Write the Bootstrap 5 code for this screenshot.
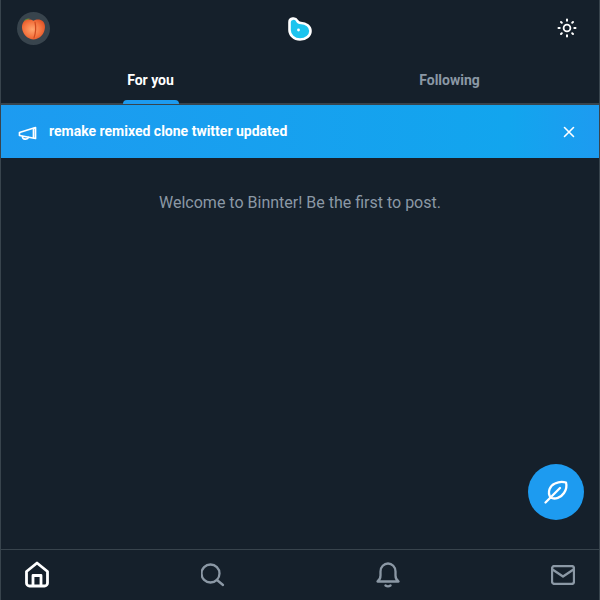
<!DOCTYPE html>
<html lang="en">
<head>
<meta charset="utf-8">
<title>Binnter</title>
<link href="https://cdn.jsdelivr.net/npm/bootstrap@5.3.0/dist/css/bootstrap.min.css" rel="stylesheet">
<style>
html,body{height:100%;}
body{background:#15202b;font-family:Roboto,"Liberation Sans",sans-serif;color:#fff;}
.shell{height:600px;border-left:1px solid #38444d;border-right:1px solid #38444d;background:#15202b;position:relative;}
.topbar{height:56px;padding:0 22px 0 16px;}
.topside{flex:1 1 0;}
.peach{width:33px;height:33px;border-radius:50%;background:#38444d;}
.logomark{margin:2px 0 0 6px;}
.tabs{height:49px;border-bottom:2px solid #38444d;}
.tabbtn{font-size:14px;font-weight:700;color:#8b98a5;height:100%;position:relative;padding-top:2px;}
.tabbtn.on{color:#fff;}
.tabbtn.on::after{content:"";position:absolute;left:50%;margin-left:-28px;bottom:-1px;width:56px;height:4px;background:#1d9bf0;border-radius:4px 4px 0 0;}
.banner{height:53px;background:linear-gradient(90deg,#1d9bf0,#12a5ee 85%,#1d9bf0);padding:0 16px;font-size:14px;font-weight:700;color:#fff;}
.welcome{color:#8b98a5;font-size:16px;padding-top:35px;line-height:20px;}
.fab{position:absolute;right:15px;bottom:80px;width:56px;height:56px;border-radius:50%;background:#1d9bf0;}
.botnav{height:51px;border-top:1px solid #38444d;padding:0 24px 0 23px;}
.botnav svg{display:block;}
.mainfeed{min-height:0;}
.closebtn{margin-right:7px;}
</style>
</head>
<body>
<div class="shell d-flex flex-column">
  <div class="topbar d-flex align-items-center">
    <div class="topside d-flex">
      <div class="peach d-flex align-items-center justify-content-center">
        <svg width="27" height="27" viewBox="0 0 26 26"><defs><radialGradient id="pg" cx="45%" cy="50%" r="62%"><stop offset="0" stop-color="#ffa56e"/><stop offset=".6" stop-color="#f4743f"/><stop offset="1" stop-color="#dc4f24"/></radialGradient></defs><path d="M3.500 6.500c1-2.500 3.500-3.500 6-3-1.500 1.500-3.500 2.500-6 3z" fill="#5f8a3a"/><path d="M13 5.500c2.500-1.500 6.500-1.800 9 .5 2.500 2.500 2.500 6.500 1.200 10-1.700 4.500-5.700 7.500-10.200 7.500S4.500 20.500 2.800 16C1.500 12.500 1.500 8.500 4 6c2.500-2.300 6.500-2 9-.5z" fill="url(#pg)"/><path d="M14.500 7c1 4.500.8 9.500-1 15" fill="none" stroke="#cf4a20" stroke-width="1.200" stroke-linecap="round"/></svg>
      </div>
    </div>
    <svg class="logomark" width="24" height="24" viewBox="0 0 24 24"><path d="M1.500 5C1.500 1 7.500.5 9 3.500 10 5.500 11 6 13 6c5 0 9.500 3.500 9.500 8S18 22.500 12 22.500 1.500 18 1.500 13z" fill="#1cc4ee" stroke="#fff" stroke-width="2.600" stroke-linejoin="round"/><circle cx="10.500" cy="13" r="1.400" fill="#fff"/></svg>
    <div class="topside d-flex justify-content-end">
      <svg width="20" height="20" viewBox="0 0 20 20" fill="none" stroke="#fff" stroke-width="2" stroke-linecap="round"><circle cx="10" cy="10" r="3.400" stroke-width="1.800"/><path d="M10 1.500v1.200M10 17.300v1.200M1.500 10h1.200M17.300 10h1.200M4 4l.8.8M15.200 15.200l.8.800M4 16l.8-.8M15.200 4.800l.8-.8"/></svg>
    </div>
  </div>
  <div class="tabs d-flex">
    <div class="tabbtn on flex-fill w-50 d-flex align-items-center justify-content-center">For you</div>
    <div class="tabbtn flex-fill w-50 d-flex align-items-center justify-content-center">Following</div>
  </div>
  <div class="banner d-flex align-items-center">
    <svg class="me-2 flex-shrink-0" width="24" height="24" viewBox="0 0 24 24" fill="none" stroke="#fff" stroke-width="1.700" stroke-linejoin="round" stroke-linecap="round"><path d="M18.500 7.500 2.500 12.500v3l16 3z"/><path d="M16.500 8.500v9"/><path d="M5.500 16.500c-.5 3 5 3.500 6 1"/></svg>
    <div class="flex-grow-1">remake remixed clone twitter updated</div>
    <svg class="closebtn" width="14" height="14" viewBox="0 0 14 14" fill="none" stroke="#fff" stroke-width="1.600" stroke-linecap="round"><path d="M2.500 2.500l9 9M11.500 2.500l-9 9"/></svg>
  </div>
  <div class="mainfeed flex-grow-1 text-center welcome">Welcome to Binnter! Be the first to post.</div>
  <div class="fab d-flex align-items-center justify-content-center">
    <svg width="26" height="26" viewBox="0 0 26 26" fill="none" stroke="#fff" stroke-width="2.300" stroke-linecap="round" stroke-linejoin="round"><path d="M2.500 23.500 7.500 18.500"/><path d="M7.500 18.500C4 13 7 6.500 12 4.500c4-2 8-2 11-1 1 3.500 0 7.500-2 10.500-3 4.500-9 7-13.500 4.500z"/><path d="M9 17 17 9"/></svg>
  </div>
  <div class="botnav d-flex align-items-center justify-content-between">
    <svg width="26" height="28" viewBox="0 0 26 28" fill="none" stroke="#fff" stroke-width="2.800" stroke-linejoin="round"><path d="M13 2 2.500 10.500V22a3 3 0 0 0 3 3h15a3 3 0 0 0 3-3V10.500z"/><path d="M9 25V14.500h8V25"/></svg>
    <svg width="24" height="24" viewBox="0 0 24 24" fill="none" stroke="#8b98a5" stroke-width="2.300" stroke-linecap="round"><circle cx="9.500" cy="10.500" r="9"/><path d="M16 17l6 5"/></svg>
    <svg width="24" height="26" viewBox="0 0 24 26" fill="none" stroke="#8b98a5" stroke-width="2.300" stroke-linecap="round" stroke-linejoin="round"><path d="M1.500 19.500c2-1.500 3-3 3-6V9.500C4.500 5 8 1.500 12 1.500s7.500 3.500 7.500 8v4c0 3 1 4.500 3 6z"/><path d="M9.500 23.500c1.500 1 3.500 1 5 0"/></svg>
    <svg width="24" height="20" viewBox="0 0 24 20" fill="none" stroke="#8b98a5" stroke-width="2.300" stroke-linejoin="round" stroke-linecap="round"><rect x="1" y="1" width="22" height="18" rx="2.500"/><path d="M1.500 4.500 12 11.500 22.500 4.500"/></svg>
  </div>
</div>
<script src="https://cdn.jsdelivr.net/npm/bootstrap@5.3.0/dist/js/bootstrap.bundle.min.js"></script>
</body>
</html>
